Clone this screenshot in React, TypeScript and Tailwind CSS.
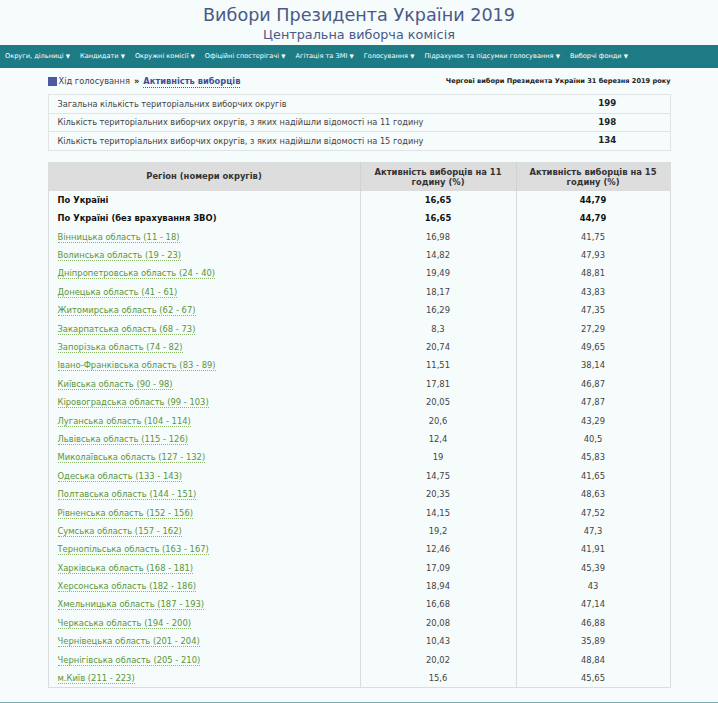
const menu = [
  "Округи, дільниці",
  "Кандидати",
  "Окружні комісії",
  "Офіційні спостерігачі",
  "Агітація та ЗМІ",
  "Голосування",
  "Підрахунок та підсумки голосування",
  "Виборчі фонди",
];

const summary = [
  { label: "Загальна кількість територіальних виборчих округів", value: "199" },
  { label: "Кількість територіальних виборчих округів, з яких надійшли відомості на 11 годину", value: "198" },
  { label: "Кількість територіальних виборчих округів, з яких надійшли відомості на 15 годину", value: "134" },
];

const totals = [
  { name: "По Україні", a: "16,65", b: "44,79" },
  { name: "По Україні (без врахування ЗВО)", a: "16,65", b: "44,79" },
];

const regions = [
  ["Вінницька область (11 - 18)", "16,98", "41,75"],
  ["Волинська область (19 - 23)", "14,82", "47,93"],
  ["Дніпропетровська область (24 - 40)", "19,49", "48,81"],
  ["Донецька область (41 - 61)", "18,17", "43,83"],
  ["Житомирська область (62 - 67)", "16,29", "47,35"],
  ["Закарпатська область (68 - 73)", "8,3", "27,29"],
  ["Запорізька область (74 - 82)", "20,74", "49,65"],
  ["Івано-Франківська область (83 - 89)", "11,51", "38,14"],
  ["Київська область (90 - 98)", "17,81", "46,87"],
  ["Кіровоградська область (99 - 103)", "20,05", "47,87"],
  ["Луганська область (104 - 114)", "20,6", "43,29"],
  ["Львівська область (115 - 126)", "12,4", "40,5"],
  ["Миколаївська область (127 - 132)", "19", "45,83"],
  ["Одеська область (133 - 143)", "14,75", "41,65"],
  ["Полтавська область (144 - 151)", "20,35", "48,63"],
  ["Рівненська область (152 - 156)", "14,15", "47,52"],
  ["Сумська область (157 - 162)", "19,2", "47,3"],
  ["Тернопільська область (163 - 167)", "12,46", "41,91"],
  ["Харківська область (168 - 181)", "17,09", "45,39"],
  ["Херсонська область (182 - 186)", "18,94", "43"],
  ["Хмельницька область (187 - 193)", "16,68", "47,14"],
  ["Черкаська область (194 - 200)", "20,08", "46,88"],
  ["Чернівецька область (201 - 204)", "10,43", "35,89"],
  ["Чернігівська область (205 - 210)", "20,02", "48,84"],
  ["м.Київ (211 - 223)", "15,6", "45,65"],
];

const App = () => {
  return (
    <div className="min-h-[703px] bg-[#f6fbfc] font-['DejaVu_Sans',sans-serif] text-[#333]">
      <header className="flex flex-col items-center pt-[3px]">
        <h1 className="text-[17.6px] leading-[24px] text-[#4b5986]">Вибори Президента України 2019</h1>
        <p className="text-[12.8px] leading-[16px] text-[#4b5986]">Центральна виборча комісія</p>
      </header>

      <nav className="mt-[2px] flex h-[23px] items-center gap-x-[10px] bg-[#1d7b86] px-[5px] text-[6.6px] text-white">
        {menu.map((item) => (
          <span key={item} className="whitespace-nowrap">
            {item} <span className="text-[5.5px]">▼</span>
          </span>
        ))}
      </nav>

      <main className="mx-auto w-[623px]">
        <div className="flex h-[26px] items-center justify-between pt-[1px]">
          <div className="flex items-center text-[8.3px]">
            <span className="mr-[2px] h-[9px] w-[9px] bg-[#4d5aa3]" />
            <span className="text-[#444]">Хід голосування</span>
            <span className="mx-[4px] font-bold">»</span>
            <span className="border-b border-dotted border-[#4d5aa3] font-bold text-[#3f4f95]">Активність виборців</span>
          </div>
          <p className="text-[6.6px] font-bold text-[#222]">
            Чергові вибори Президента України 31 березня 2019 року
          </p>
        </div>

        <table className="w-full border-collapse border border-[#e0e4e5] text-[8.2px] text-[#444]">
          <tbody>
            {summary.map((row) => (
              <tr key={row.label} className="h-[18.5px] border-b border-[#e0e4e5]">
                <td className="px-[9px]">{row.label}</td>
                <td className="w-[125px] text-center text-[8.6px] font-bold text-[#222]">{row.value}</td>
              </tr>
            ))}
          </tbody>
        </table>

        <table className="mt-[11px] w-full border-collapse border border-[#d9dddd] text-[8.4px] text-[#444]">
          <thead>
            <tr className="h-[29px] bg-[#dddddd] font-bold text-[#333]">
              <th className="w-[312px] border-r border-[#cfd3d4]">Регіон (номери округів)</th>
              <th className="w-[156px] border-r border-[#cfd3d4] px-[6px] leading-[10px]">
                Активність виборців на 11 годину (%)
              </th>
              <th className="px-[6px] leading-[10px]">Активність виборців на 15 годину (%)</th>
            </tr>
          </thead>
          <tbody>
            {totals.map((row) => (
              <tr key={row.name} className="h-[18.4px] font-bold text-[#111]">
                <td className="border-r border-[#d9dddd] px-[9px]">{row.name}</td>
                <td className="border-r border-[#d9dddd] text-center">{row.a}</td>
                <td className="text-center">{row.b}</td>
              </tr>
            ))}
            {regions.map(([name, a, b]) => (
              <tr key={name} className="h-[18.4px]">
                <td className="border-r border-[#d9dddd] px-[9px]">
                  <span className="border-b border-dotted border-[#8ab86a] text-[#5a963a]">{name}</span>
                </td>
                <td className="border-r border-[#d9dddd] text-center">{a}</td>
                <td className="text-center">{b}</td>
              </tr>
            ))}
          </tbody>
        </table>
      </main>

      <footer className="mt-[14px] h-[4px] border-t-2 border-[#7fa9b0]" />
    </div>
  );
};

export default App;
